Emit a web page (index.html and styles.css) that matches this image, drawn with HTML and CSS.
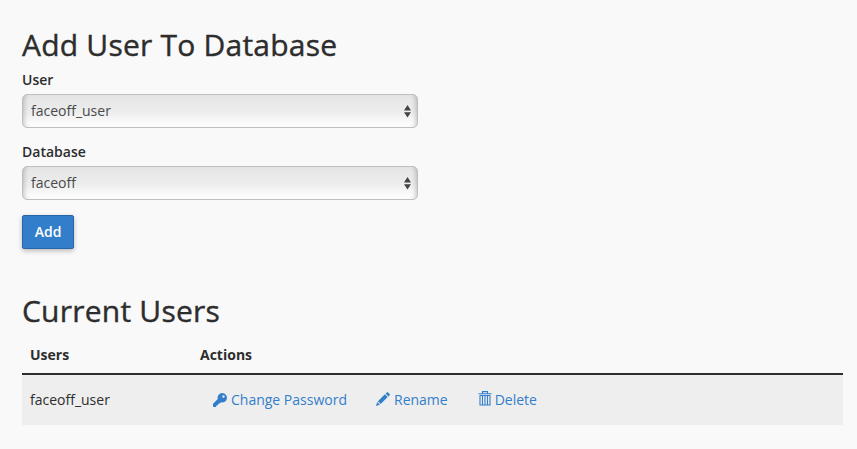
FILE: index.html
```html
<!DOCTYPE html>
<html lang="en">
<head>
<meta charset="utf-8">
<title>Databases</title>
<link rel="stylesheet" href="styles.css">
</head>
<body>
<main class="page">
  <section class="add-user">
    <h2 class="heading">Add User To Database</h2>
    <form class="form">
      <label class="label" for="user">User</label>
      <div class="select-wrap">
        <select class="select" id="user"><option>faceoff_user</option></select>
        <svg class="arrows" viewBox="0 0 7 13" aria-hidden="true"><path d="M3.500 0 7 5.400H0zM3.500 12.600 0 7.200h7z"/></svg>
      </div>
      <label class="label" for="database">Database</label>
      <div class="select-wrap">
        <select class="select" id="database"><option>faceoff</option></select>
        <svg class="arrows" viewBox="0 0 7 13" aria-hidden="true"><path d="M3.500 0 7 5.400H0zM3.500 12.600 0 7.200h7z"/></svg>
      </div>
      <button class="button" type="button">Add</button>
    </form>
  </section>
  <section class="current-users">
    <h2 class="heading">Current Users</h2>
    <table class="table">
      <thead>
        <tr><th class="col-user">Users</th><th>Actions</th></tr>
      </thead>
      <tbody>
        <tr>
          <td>faceoff_user</td>
          <td>
            <div class="actions">
              <a class="action"><svg class="icon" viewBox="0 0 14 14"><path fill-rule="evenodd" d="M9.300 0a4.700 4.700 0 0 0-4.500 6.100L.3 10.600Q0 10.900 0 11.300V13.300q0 .7.7.7H3L3.400 12.600 4.800 12.300 5.100 10.900 6.600 10.500 7.900 9.200A4.700 4.700 0 1 0 9.300 0M10.500 2.300a1.200 1.200 0 1 1 0 2.400 1.200 1.200 0 0 1 0-2.400"/></svg>Change Password</a>
              <a class="action"><svg class="icon icon-pencil" viewBox="0 0 14 14"><path d="M0 14 1.200 10.100 3.900 12.800zM1.900 9.300 8.900 2.300 11.700 5.100 4.700 12.100zM9.600 1.600 10.800.4q.6-.6 1.200 0L13.600 2q.6.6 0 1.200L12.400 4.400z"/></svg>Rename</a>
              <a class="action"><svg class="icon icon-trash" viewBox="0 0 14 15"><path class="stroke" d="M.5 2.700h13M4.500 2.500V.6h5v1.900M2 4.500v9.500h10V4.500zM4.500 5v8.500M7 5v8.500M9.500 5v8.500"/></svg>Delete</a>
            </div>
          </td>
        </tr>
      </tbody>
    </table>
  </section>
</main>
</body>
</html>
```
FILE: styles.css
```css
* {
  box-sizing: border-box;
}

body {
  margin: 0;
  background: #f9f9f9;
  color: #2d2d2d;
  font: 14px/20px "Open Sans", sans-serif;
}

.page {
  padding: 28px 14px 0 22px;
}

.heading {
  margin: 0;
  font-size: 30px;
  line-height: 33px;
  font-weight: 500;
  letter-spacing: 0.22px;
  -webkit-text-stroke: 0.4px currentColor;
}

.form {
  display: flex;
  flex-direction: column;
  align-items: flex-start;
  padding-top: 9px;
}

.label {
  height: 24px;
  font-weight: 600;
}

.select-wrap {
  position: relative;
  width: 396px;
  height: 34px;
  margin-bottom: 14px;
}

.select {
  display: block;
  width: 100%;
  height: 100%;
  padding: 0 20px 0 8px;
  appearance: none;
  border: 1px solid #bfbfbf;
  border-radius: 5px;
  background: linear-gradient(#e5e5e5, #ececec 50%, #fff);
  box-shadow: inset 5px 0 5px -4px rgba(0, 0, 0, 0.22), inset -5px 0 5px -4px rgba(0, 0, 0, 0.22);
  color: #4a4a4a;
  font: inherit;
}

.arrows {
  position: absolute;
  top: 11px;
  right: 7px;
  width: 7px;
  height: 13px;
  fill: #444;
}

.button {
  width: 52px;
  height: 34px;
  margin-top: 1px;
  padding: 0;
  border: 1px solid #2567a8;
  border-radius: 2px;
  background: #337ecb;
  box-shadow: 0 2px 5px rgba(0, 0, 0, 0.26);
  color: #fff;
  font: 600 14px/20px "Open Sans", sans-serif;
}

.current-users {
  padding-top: 45px;
}

.table {
  width: 100%;
  margin-top: 9px;
  border-collapse: collapse;
  table-layout: fixed;
}

.table th {
  height: 38px;
  padding: 0 8px;
  border-bottom: 2px solid #2d2d2d;
  font-weight: 700;
  text-align: left;
}

.table .col-user {
  width: 170px;
}

.table td {
  height: 51px;
  padding: 0 8px;
  background: #eee;
}

.actions {
  display: flex;
  gap: 29px;
  padding-left: 13px;
}

.action {
  display: flex;
  align-items: center;
  gap: 4px;
  color: #337ecb;
}

.icon {
  width: 14px;
  height: 14px;
  fill: currentColor;
}

.icon-pencil {
  margin-top: -2px;
}

.icon-trash {
  height: 15px;
  margin: -3px -1px 0 1px;
}

.stroke {
  fill: none;
  stroke: currentColor;
  stroke-width: 1.1;
}
```
